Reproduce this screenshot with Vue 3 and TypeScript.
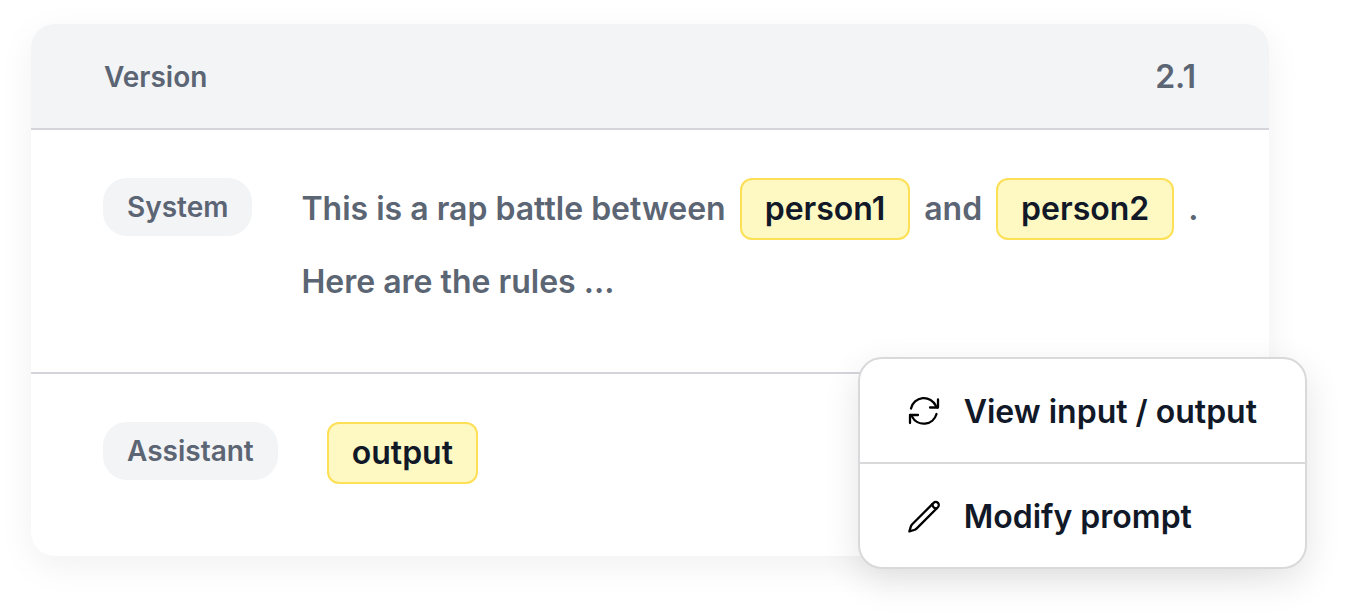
<script setup lang="ts">
interface Part {
  text: string
  variable?: boolean
}

const version = '2.1'

const systemLines: Part[][] = [
  [
    { text: 'This is a rap battle between' },
    { text: 'person1', variable: true },
    { text: 'and' },
    { text: 'person2', variable: true },
    { text: '.' },
  ],
  [{ text: 'Here are the rules ...' }],
]
</script>

<template>
  <main class="stage">
    <section class="card">
      <header class="card-header">
        <span class="label">Version</span>
        <span class="version">{{ version }}</span>
      </header>

      <div class="message system">
        <span class="role">System</span>
        <div class="prompt">
          <p v-for="(line, i) in systemLines" :key="i" class="line">
            <span v-for="part in line" :key="part.text" :class="{ chip: part.variable }">{{ part.text }}</span>
          </p>
        </div>
      </div>

      <div class="message assistant">
        <span class="role">Assistant</span>
        <span class="chip">output</span>
      </div>
    </section>

    <div class="menu">
      <button type="button" class="menu-item">
        <svg class="icon" viewBox="0 0 32 32" aria-hidden="true">
          <path d="M3 12.5 A13.2 13.2 0 0 1 28 10 L29.5 11.5" />
          <path d="M30 3.5 V11.5 H22" />
          <path d="M28.5 18 A13.2 13.2 0 0 1 4 20.5 L2.5 19" />
          <path d="M2 27 V19 H10" />
        </svg>
        <span>View input / output</span>
      </button>
      <button type="button" class="menu-item">
        <svg class="icon" viewBox="0 0 32 32" aria-hidden="true">
          <path d="M1.4 30.4 L2.8 25.7 Q3.2 24.3 4.2 23.3 L25.6 1.9 A3 3 0 0 1 29.9 6.2 L8.5 27.6 Q7.5 28.6 6.1 29 Z" />
          <path d="M24.4 3.2 C24.5 5.6 26.1 7.3 28.6 7.4" />
        </svg>
        <span>Modify prompt</span>
      </button>
    </div>
  </main>
</template>

<style>
body {
  margin: 0;
  background: #fff;
}
</style>

<style scoped>
.stage {
  position: relative;
  box-sizing: border-box;
  padding: 24px 76px 59px 31px;
  font-family: Inter, "Liberation Sans", sans-serif;
  font-size: 32px;
  font-weight: 600;
  line-height: 40px;
  color: #5b6573;
}

.card {
  border-radius: 24px;
  background: #fff;
  box-shadow: 0 10px 36px rgba(0, 0, 0, 0.06);
  overflow: hidden;
}

.card-header {
  display: flex;
  align-items: center;
  justify-content: space-between;
  padding: 33px 73px 31px;
  background: #f3f4f6;
  border-bottom: 2px solid #d3d5db;
}

.label,
.role {
  font-size: 28px;
}

.message {
  display: flex;
  align-items: flex-start;
  gap: 49px;
  padding: 48px 48px 72px 72px;
}

.system {
  padding-bottom: 60px;
  border-bottom: 2px solid #d3d5db;
}

.role {
  flex: none;
  padding: 9px 24px;
  border-radius: 24px;
  background: #f3f4f6;
}

.prompt {
  display: grid;
  gap: 12px;
}

.line {
  display: flex;
  flex-wrap: wrap;
  align-items: center;
  gap: 14px;
  min-height: 60px;
  margin: 0;
}

.chip {
  padding: 9px 23px;
  border: 2px solid #fde055;
  border-radius: 12px;
  background: #fef8c3;
  color: #111827;
}

.menu {
  position: absolute;
  right: 38px;
  bottom: 46px;
  border: 2px solid #d9d9db;
  border-radius: 24px;
  background: #fff;
  box-shadow: 0 12px 36px rgba(0, 0, 0, 0.11);
  overflow: hidden;
}

.menu-item {
  display: flex;
  align-items: center;
  gap: 24px;
  width: 100%;
  padding: 33px 48px 30px;
  border: 0;
  background: none;
  font: inherit;
  color: #111827;
  cursor: pointer;
}

.menu-item + .menu-item {
  border-top: 2px solid #d9d9db;
}

.icon {
  flex: none;
  width: 32px;
  height: 32px;
  fill: none;
  stroke: #000;
  stroke-width: 2.3;
  stroke-linecap: round;
  stroke-linejoin: round;
  overflow: visible;
}
</style>
